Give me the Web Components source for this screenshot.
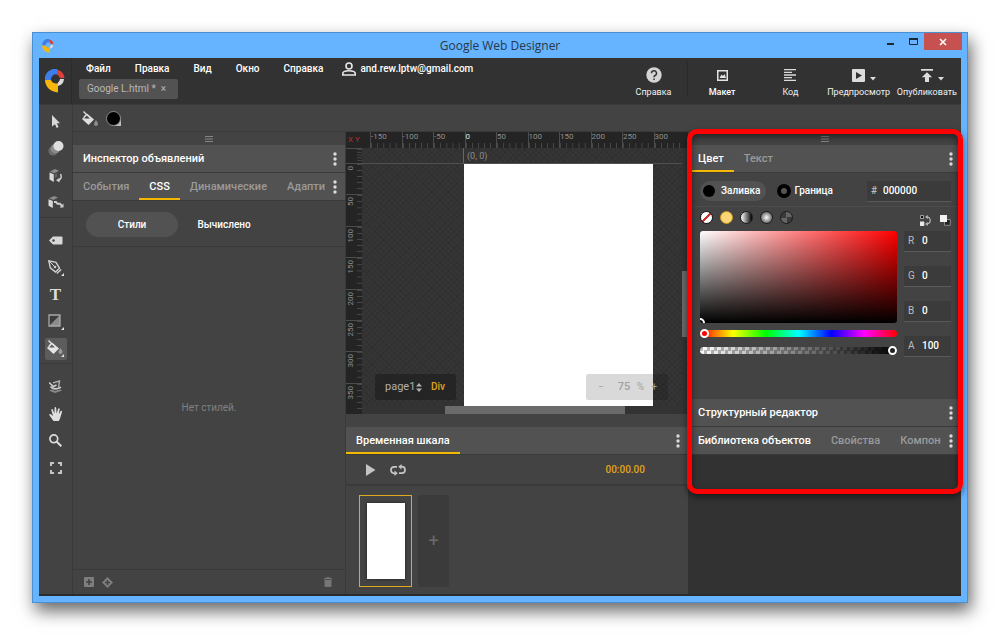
<!DOCTYPE html>
<html lang="ru">
<head>
<meta charset="utf-8">
<title>Google Web Designer</title>
<style>
  html, body { height: 100%; margin: 0; }
  body {
    box-sizing: border-box; padding: 32px; background: #fff; overflow: hidden;
    font: 11px/16px Roboto, "Noto Sans", sans-serif; color: #f0f0f0;
    --bar: #323232; --panel: #434343; --head: #525252; --line: #3a3a3a; --field: #3b3b3b;
    --muted: #9a9a9a; --accent: #f5b800;
  }
</style>
</head>
<body>
<gwd-window heading="Google Web Designer">
  <gwd-app-bar></gwd-app-bar>
  <gwd-workspace>
    <gwd-tool-rail slot="rail"></gwd-tool-rail>
    <gwd-fill-bar slot="options"></gwd-fill-bar>
    <gwd-inspector slot="left"></gwd-inspector>
    <gwd-stage slot="stage"></gwd-stage>
    <gwd-timeline slot="timeline"></gwd-timeline>
    <gwd-side slot="right"></gwd-side>
  </gwd-workspace>
</gwd-window>

<script>
const RESET = `
  *, *::before, *::after { box-sizing: border-box; }
  button, input, select { font: inherit; color: inherit; background: none; border: 0; margin: 0; padding: 0; border-radius: 0; min-width: 0; }
  button { display: inline-flex; align-items: center; justify-content: center; white-space: nowrap; }
  input, select { appearance: none; outline: 0; }
`;

function element(name, css, html, setup) {
  const template = document.createElement('template');
  template.innerHTML = `<style>${RESET}${css}</style>${html}`;
  customElements.define(name, class extends HTMLElement {
    connectedCallback() {
      if (this.shadowRoot) return;
      this.attachShadow({ mode: 'open' }).append(template.content.cloneNode(true));
      if (setup) setup(this, this.shadowRoot);
    }
  });
}

/* name: [width, height, markup] */
const ICONS = {
  logo: [20, 24, '<path d="M0 11A10 10 0 0 1 12 0V5.500A5 5 0 0 0 6 11Z" fill="#3f7de8"/><path d="M12 0.500A10 10 0 0 1 19.500 9H15A6 6 0 0 0 12 5.500Z" fill="#e04038"/><path d="M15 10H19A8 8 0 0 1 13 17V13.500A5 5 0 0 0 15 10Z" fill="#dcdcdc"/><path d="M0 11H6A5 5 0 0 0 13 14V23.500C6 23 0 18 0 11Z" fill="#f4b60f"/>'],
  min: [8, 8, '<path d="M0 5h7v2H0z" fill="#1c2833"/>'],
  max: [9, 8, '<path d="M.5.500h8v6h-8z" fill="none" stroke="#1c2833"/><path d="M0 0h9v2H0z" fill="#1c2833"/>'],
  close: [8, 8, '<path d="M1 1l6 6M7 1L1 7" stroke="#fff" stroke-width="1.600"/>'],
  user: [14, 14, '<circle cx="7" cy="4" r="3" fill="none" stroke="#e8e8e8" stroke-width="1.600"/><path d="M.8 13v-1.500C.8 9.500 4 8.800 7 8.800s6.200.7 6.200 2.700V13z" fill="none" stroke="#e8e8e8" stroke-width="1.600"/>'],
  help: [16, 16, '<circle cx="8" cy="8" r="7.700" fill="#d4d4d4"/><path d="M5.500 6.300a2.500 2.500 0 1 1 3.600 2.200C8.300 9 8 9.300 8 10.300M8 11.400v1.600" fill="none" stroke="#323232" stroke-width="1.500"/>'],
  image: [11, 11, '<path d="M.75.750h9.500v9.500H.75z" fill="none" stroke="#e4e4e4" stroke-width="1.500"/><path d="M2.500 8L4.500 4.500 6 6l1.500-2L9 8z" fill="#e4e4e4"/>'],
  lines: [12, 12, '<path d="M0 .7h12M0 3.300h8M0 6h12M0 8.700h8M0 11.300h12" stroke="#dcdcdc" stroke-width="1.300"/>'],
  preview: [13, 13, '<rect width="13" height="13" rx="1" fill="#dcdcdc"/><path d="M4 3l6 3.500L4 10z" fill="#323232"/>'],
  publish: [12, 13, '<path d="M0 0h12v1.800H0zM6 3.200l5.200 5H8V13H4V8.200H.8z" fill="#dcdcdc"/>'],
  caret: [6, 4, '<path d="M0 0h6L3 3.500z" fill="#dcdcdc"/>'],
  grip: [8, 6, '<path d="M0 .5h8M0 3h8M0 5.500h8" stroke="#858585"/>'],
  dots: [4, 14, '<circle cx="2" cy="2" r="1.700"/><circle cx="2" cy="7" r="1.700"/><circle cx="2" cy="12" r="1.700"/>'],
  arrow: [8, 13, '<path d="M0 0l8 8.200H4.800L6.600 12l-1.900.9L3 9.200 0 11.500z" fill="#d8d8d8"/>'],
  motion: [16, 15, '<circle cx="5" cy="10" r="4.600" fill="#6c6c6c"/><circle cx="7.500" cy="7.600" r="4.800" fill="#8c8c8c"/><circle cx="10.500" cy="5" r="5" fill="#dedede"/>'],
  rotate3d: [14, 14, '<path d="M1 2.500L6 0l4 1.800-4.500 2.500z" fill="#8a8a8a"/><path d="M.5 3.500l4.300 1.700V13L.5 10.500z" fill="#d8d8d8"/><path d="M6 5.300l2-1v3.500L6 9z" fill="#666"/><path d="M11.500 5c1.600 2.800.6 5.200-2 6.500" fill="none" stroke="#cfcfcf" stroke-width="1.500"/><path d="M10.500 8.800v4.700L7 11.200z" fill="#cfcfcf"/>'],
  move3d: [16, 13, '<path d="M1 2.200L6 0l4 1.600-4.500 2.300z" fill="#8a8a8a"/><path d="M.5 3.200l4.300 1.700V12L.5 9.800z" fill="#d8d8d8"/><path d="M6 6h2l1.500 1.800h2.500l2 2" fill="none" stroke="#cfcfcf" stroke-width="1.900"/><path d="M15.500 7.500v4h-4z" fill="#cfcfcf"/>'],
  tag: [14, 9, '<path d="M4 .5h8.500a1 1 0 0 1 1 1v6a1 1 0 0 1-1 1H4l-4-4z" fill="#d8d8d8"/><circle cx="4.500" cy="4.500" r="1.200" fill="#434343"/>'],
  pen: [16, 16, '<path d="M.8.8l1.500 7 5.200 4.200 4-3.800L8 2.300z" fill="none" stroke="#cfcfcf" stroke-width="1.400"/><path d="M.8.8l5.500 5.500" stroke="#cfcfcf"/><circle cx="7" cy="7" r="1.300" fill="#cfcfcf"/><path d="M8.800 13.500l4.300-4" stroke="#cfcfcf" stroke-width="1.500"/><path d="M16 13v3h-3z" fill="#e4e4e4"/>'],
  shape: [17, 16, '<path d="M2 1h11v11H2z" fill="#3b3b3b"/><path d="M13 1v11H2z" fill="#8c8c8c"/><path d="M2 1h11v11H2z" fill="none" stroke="#a8a8a8" stroke-width="1.300"/><path d="M17 13v3h-3z" fill="#e4e4e4"/>'],
  bucket: [16, 15, '<path d="M5 2.500l7 6L6.500 14 0 8z" fill="#dedede"/><path d="M1.500.5l6 6M5.200 3.200L2 6" stroke="#dedede" stroke-width="1.400"/><path d="M4.800 4.500L8 7.500H2z" fill="#434343"/><path d="M14 9c1.500 2.200 2 3 2 4a2 2 0 0 1-4 0c0-1 .7-2 2-4z" fill="#8c8c8c"/>'],
  bucketTool: [17, 17, '<path d="M5 2.500l7 6L6.500 14 0 8z" fill="#e6e6e6"/><path d="M1.500.5l6 6M5.200 3.200L2 6" stroke="#e6e6e6" stroke-width="1.400"/><path d="M4.800 4.500L8 7.500H2z" fill="#5c5c5c"/><path d="M13.500 8c1.500 2.200 2 3 2 4a2 2 0 0 1-4 0c0-1 .7-2 2-4z" fill="#9a9a9a"/><path d="M17 14v3h-3z" fill="#e4e4e4"/>'],
  rotate: [13, 13, '<path d="M4 2.800L10.500 1 9.500 7.500" fill="none" stroke="#b0b0b0" stroke-width="1.400"/><path d="M0 2.500l4.500 4 3-1.500M1.500 6.500c2 2.800 6 3 10.500.8" fill="none" stroke="#cfcfcf" stroke-width="1.600"/><path d="M0 10.500l6 2.500 7-2.500-2-1-5 1.500-3-1.500z" fill="#8c8c8c"/>'],
  hand: [14, 14, '<path d="M4.500 14C3 12 1.500 9.800.3 8c-.5-.9.7-1.500 1.500-.8L4 9 2.300 3c-.2-1 1.200-1.400 1.500-.4L5.400 6.600 5.600 1c0-1.200 1.500-1.200 1.600 0l.4 5.400L9.200 1.700c.4-1 1.700-.6 1.500.5L9.800 7.200l1.800-3c.6-.9 1.800-.2 1.400.8L11 11.500c-.4 1.300-.8 2-1.300 2.500z" fill="#e0e0e0"/>'],
  zoom: [13, 13, '<circle cx="4.800" cy="4.800" r="3.900" fill="none" stroke="#dcdcdc" stroke-width="1.700"/><path d="M7.800 7.800l4.500 4.500" stroke="#dcdcdc" stroke-width="2"/>'],
  fit: [12, 12, '<path d="M1 4V1h3M8 1h3v3M11 8v3H8M4 11H1V8" fill="none" stroke="#c4c4c4" stroke-width="2"/>'],
  add: [10, 10, '<rect width="10" height="10" rx="1" fill="#7e7e7e"/><path d="M5 2v6M2 5h6" stroke="#434343" stroke-width="1.600"/>'],
  keyframe: [11, 11, '<path d="M5.500 0L11 5.500 5.500 11 0 5.500z" fill="#7e7e7e"/><path d="M5.500 3v5M3 5.500h5" stroke="#434343" stroke-width="1.400"/>'],
  trash: [8, 10, '<path d="M0 1h2.500L3 0h2l.5 1H8v1.200H0zM.5 3h7v6a1 1 0 0 1-1 1h-5a1 1 0 0 1-1-1z" fill="#767676"/>'],
  play: [10, 12, '<path d="M0 0l9.500 6L0 12z" fill="#c4c4c4"/>'],
  loop: [16, 12, '<path d="M5.500 9.300H4.200a3.200 3.200 0 0 1 0-6.400H7M10.500 2.700h1.300a3.200 3.200 0 0 1 0 6.400H9" fill="none" stroke="#c4c4c4" stroke-width="1.700"/><path d="M11.500 0v5.400L8.200 2.700zM4.500 6.600V12l3.300-2.700z" fill="#c4c4c4"/>'],
  updown: [6, 9, '<path d="M3 0l3 3.500H0zM3 9L0 5.500h6z" fill="#b0b0b0"/>'],
  swap: [11, 11, '<path d="M.5.500h3v3h-3z" fill="#111" stroke="#bbb" stroke-width=".8"/><path d="M0 6.500h4.300V11H0z" fill="#e8e8e8"/><path d="M7 2c4 0 4.500 6.500 0 7" fill="none" stroke="#b8b8b8" stroke-width="1.200"/><path d="M7.800 0v4L5 2zM7.800 7v4L5 9z" fill="#b8b8b8"/>'],
  reset: [11, 11, '<path d="M4.500 4.500h5.800v5.800H4.500z" fill="#222" stroke="#8a8a8a"/><path d="M0 0h7v7H0z" fill="#f4f4f4"/>']
};

class GwdIcon extends HTMLElement {
  connectedCallback() {
    if (this.shadowRoot) return;
    const [w, h, art] = ICONS[this.getAttribute('name')];
    const width = this.getAttribute('width') || w;
    this.attachShadow({ mode: 'open' }).innerHTML =
      `<style>:host{display:inline-flex;flex:none}svg{display:block;fill:#dadada}</style>
       <svg width="${width}" height="${Math.round(h * width / w)}" viewBox="0 0 ${w} ${h}" aria-hidden="true">${art}</svg>`;
  }
}
customElements.define('gwd-icon', GwdIcon);

element('gwd-window', `
  :host { display: flex; flex-direction: column; height: 100%; background: #66b3ff; border: 1px solid #4a8fd0;
    box-sizing: border-box; box-shadow: 3px 8px 16px rgba(0,0,0,.6); }
  header { display: grid; grid-template-columns: 1fr auto 1fr; align-items: center; height: 25px; flex: none; }
  header gwd-icon[name=logo] { margin-left: 9px; }
  h1 { margin: 0; font: 12px/16px "Open Sans", "Noto Sans", sans-serif; color: #26384a; }
  nav { display: flex; justify-content: flex-end; align-self: start; padding-right: 5px; }
  nav button { width: 22px; height: 17px; }
  nav .close { width: 38px; background: #c75050; }
  main { flex: 1; min-height: 0; margin: 0 6px 6px; display: flex; flex-direction: column; background: var(--panel); border-bottom: 2px solid #2b2b2b; }
`, `
  <header><gwd-icon name="logo" width="12"></gwd-icon><h1></h1>
    <nav><button aria-label="Свернуть"><gwd-icon name="min"></gwd-icon></button><button aria-label="Развернуть"><gwd-icon name="max"></gwd-icon></button><button class="close" aria-label="Закрыть"><gwd-icon name="close"></gwd-icon></button></nav>
  </header>
  <main><slot></slot></main>
`, (host, root) => { root.querySelector('h1').textContent = host.getAttribute('heading'); });

element('gwd-action', `
  :host { display: block; flex: 1 1 0; min-width: 0; }
  button { display: flex; flex-direction: column; width: 100%; justify-content: flex-start; padding-top: 8px; font-size: 9px; line-height: 16px; }
  .icon { display: flex; align-items: center; justify-content: center; gap: 5px; height: 18px; flex: none; }
  .icon gwd-icon[name=caret] { align-self: flex-end; margin-bottom: 3px; }
  :host([menu]) .icon { padding-left: 11px; }
  :host([current]) button { font-weight: 500; color: #fff; }
`, `<button><span class="icon"></span><slot></slot></button>`, (host, root) => {
  root.querySelector('.icon').innerHTML = `<gwd-icon name="${host.getAttribute('icon')}"></gwd-icon>` +
    (host.hasAttribute('menu') ? '<gwd-icon name="caret"></gwd-icon>' : '');
});

element('gwd-app-bar', `
  :host { display: flex; flex: none; height: 47px; background: var(--bar); border-bottom: 1px solid #393939; box-sizing: border-box; font-size: 10px; }
  .logo { width: 33px; display: grid; place-items: center; flex: none; border-right: 1px solid #2c2c2c; }
  .left { flex: 1; min-width: 0; padding-left: 7px; }
  .menu { display: flex; align-items: center; gap: 24px; height: 21px; padding-left: 7px; font-weight: 500; color: #fff; }
  .menu button { height: 20px; }
  .account { gap: 4px; margin-left: -5px; }
  .file { display: inline-flex; align-items: center; gap: 5px; height: 20px; padding: 0 12px 0 8px; background: var(--head); border-radius: 2px; color: #b8b8b8; }
  .help, .modes { display: flex; flex: none; }
  .help { width: 69px; background: linear-gradient(#292929, #292929) 100% 4px / 1px 35px no-repeat; }
  .modes { width: 273px; }
`, `
  <div class="logo"><gwd-icon name="logo"></gwd-icon></div>
  <div class="left">
    <nav class="menu"><button>Файл</button><button>Правка</button><button>Вид</button><button>Окно</button><button>Справка</button>
      <button class="account"><gwd-icon name="user"></gwd-icon>and.rew.lptw@gmail.com</button></nav>
    <div class="file"><span>Google L.html *</span><button aria-label="Закрыть файл">×</button></div>
  </div>
  <div class="help"><gwd-action icon="help">Справка</gwd-action></div>
  <div class="modes"><gwd-action icon="image" current>Макет</gwd-action><gwd-action icon="lines">Код</gwd-action><gwd-action icon="preview" menu>Предпросмотр</gwd-action><gwd-action icon="publish" menu>Опубликовать</gwd-action></div>
`);

element('gwd-workspace', `
  :host { flex: 1; min-height: 0; display: grid; grid-template-columns: 34px 273px minmax(0, 1fr) 273px;
    grid-template-rows: 27px minmax(0, 282fr) minmax(0, 180fr);
    grid-template-areas: "rail options options options" "rail left stage right" "rail left timeline right"; }
  slot { display: grid; min-height: 0; min-width: 0; }
  slot[name=rail] { grid-area: rail; } slot[name=options] { grid-area: options; } slot[name=left] { grid-area: left; }
  slot[name=stage] { grid-area: stage; } slot[name=timeline] { grid-area: timeline; } slot[name=right] { grid-area: right; }
`, ['rail', 'options', 'left', 'stage', 'timeline', 'right'].map(s => `<slot name="${s}"></slot>`).join(''));

element('gwd-tool-rail', `
  :host { display: block; border-right: 1px solid var(--line); padding-top: 3px; box-sizing: border-box; }
  .group { display: grid; grid-auto-rows: 27px; justify-items: center; align-items: center; }
  .group + .group { border-top: 1px solid var(--line); margin-top: 1px; padding-top: 9px; }
  button { width: 22px; height: 22px; border-radius: 2px; }
  button[aria-pressed=true] { background: #5c5c5c; }
  .text { font: bold 17px/20px "Liberation Serif", serif; color: #dcdcdc; }
`, [[['arrow', 'Выделение'], ['motion', 'Движение'], ['rotate3d', 'Поворот'], ['move3d', 'Перемещение']],
    [['tag', 'Тег'], ['pen', 'Перо'], ['T', 'Текст'], ['shape', 'Фигура'], ['bucketTool', 'Заливка']],
    [['rotate', 'Вращение сцены'], ['hand', 'Рука'], ['zoom', 'Масштаб'], ['fit', 'По размеру']]]
  .map(g => `<div class="group">${g.map(([i, label]) => i === 'T'
    ? `<button class="text" aria-label="${label}">T</button>`
    : `<button aria-label="${label}" aria-pressed="${i === 'bucketTool'}"><gwd-icon name="${i}"></gwd-icon></button>`).join('')}</div>`).join(''));

element('gwd-fill-bar', `
  :host { display: flex; align-items: center; gap: 7px; padding-left: 9px; border-bottom: 1px solid var(--line); box-sizing: border-box; }
  .chip { width: 16px; height: 16px; background: linear-gradient(135deg, transparent 70%, #bdbdbd 70%); }
  .chip::before { content: ""; width: 15px; height: 15px; border-radius: 50%; background: #000; border: 1px solid #8d8d8d; }
`, `<gwd-icon name="bucket"></gwd-icon><button class="chip" aria-label="Цвет заливки"></button>`);

element('gwd-grip', `
  :host { display: flex; align-items: center; justify-content: center; height: 13px; flex: none; }
`, `<gwd-icon name="grip"></gwd-icon>`);

/* Tabs are slotted buttons, so their owner's reset has to be overruled here. */
element('gwd-tabs', `
  :host { display: flex; flex: none; height: 28px; background: var(--head); border-bottom: 1px solid var(--line); box-sizing: border-box; }
  .list { display: flex; flex: 1; min-width: 0; overflow: hidden; }
  ::slotted(button) { flex: none; padding: 2px 10px 0 !important; border-bottom: 2px solid transparent !important;
    font-weight: 500 !important; color: var(--muted) !important; }
  ::slotted(button.on) { color: #fff !important; }
  ::slotted(button.line) { border-bottom-color: var(--accent) !important; }
  .more { width: 20px; flex: none; }
`, `<div class="list"><slot></slot></div><button class="more" aria-label="Меню панели"><gwd-icon name="dots"></gwd-icon></button>`);

element('gwd-inspector', `
  :host { display: flex; flex-direction: column; border-right: 1px solid var(--line); box-sizing: border-box; min-width: 0; }
  .modes { display: flex; align-items: center; height: 46px; padding: 2px 0 0 13px; border-bottom: 1px solid var(--line); font-size: 10px; font-weight: 500; color: #fff; flex: none; }
  .modes button { width: 92px; height: 25px; border-radius: 13px; }
  .modes .on { background: var(--head); }
  .empty { flex: 1; display: grid; place-items: center; color: #808080; margin: 0; font-size: 10px; }
  footer { display: flex; align-items: center; gap: 8px; height: 25px; flex: none; padding: 0 13px 0 11px; border-top: 1px solid var(--line); }
  footer .del { margin-left: auto; }
`, `
  <gwd-grip></gwd-grip>
  <gwd-tabs><button class="on">Инспектор объявлений</button></gwd-tabs>
  <gwd-tabs><button>События</button><button class="on line">CSS</button><button>Динамические</button><button>Адаптивный</button></gwd-tabs>
  <div class="modes"><button class="on">Стили</button><button>Вычислено</button></div>
  <p class="empty">Нет стилей.</p>
  <footer><button aria-label="Добавить"><gwd-icon name="add"></gwd-icon></button><button aria-label="Ключевой кадр"><gwd-icon name="keyframe"></gwd-icon></button><button class="del" aria-label="Удалить"><gwd-icon name="trash"></gwd-icon></button></footer>
`);

element('gwd-stage', `
  :host { display: grid; grid-template-columns: 16px minmax(0, 1fr) 6px; grid-template-rows: 16px minmax(0, 1fr) 8px; background: #242424; min-width: 0; overflow: hidden; }
  .xy { display: flex; align-items: center; justify-content: center; font-size: 8px; line-height: 8px; color: #b03030; }
  .rx, .ry { display: grid; font-size: 8px; line-height: 8px; color: #8f8f8f; overflow: hidden; }
  .rx { grid-column: 2 / 4; grid-template-columns: 8px repeat(10, 1fr); padding-right: 3px; }
  .rx span { border-left: 1px solid #4c4c4c; padding: 1px 0 0; background: linear-gradient(90deg, #474747 1px, transparent 1px) 0 100% / 20% 5px repeat-x; }
  .rx span:nth-child(5) { color: #e0e0e0; }
  .ry { grid-row: 2 / 4; grid-template-rows: 15px repeat(8, 1fr); }
  .ry span { border-top: 1px solid #4c4c4c; background: linear-gradient(#474747 1px, transparent 1px) 100% 0 / 5px 20% repeat-y; }
  .ry b { font-weight: 400; writing-mode: vertical-rl; transform: rotate(180deg); margin: 2px 0 0 1px; display: block; width: 8px; text-align: right; }
  .view { position: relative; display: grid; grid-template-columns: 102px 189px 1fr; grid-template-rows: 16px minmax(0, 1fr);
    background: repeating-linear-gradient(45deg, rgba(0,0,0,.08) 0 1px, transparent 1px 4px), repeating-linear-gradient(-45deg, rgba(0,0,0,.08) 0 1px, transparent 1px 4px), #353535; }
  .view::before { content: ""; position: absolute; left: 0; right: 0; top: 15px; height: 1px; background: #505050; }
  .origin { grid-column: 2 / 4; padding-left: 3px; border-left: 1px solid #666; margin-left: -1px; font-size: 9px; line-height: 16px; color: #8f8f8f; }
  .page { grid-row: 2; grid-column: 2; background: #fff; }
  .crumb, .scale { position: absolute; bottom: 6px; height: 26px; display: flex; align-items: center; border-radius: 2px; }
  .crumb { left: 13px; padding: 0 11px 0 10px; background: rgba(34,34,34,.8); color: #b0b0b0; font-size: 10px; }
  .crumb label { display: flex; align-items: center; gap: 2px; }
  .crumb select { width: 29px; font-size: 11px; }
  .crumb button { margin-left: 9px; color: #e0a51a; font-weight: 500; }
  .scale { right: 14px; width: 82px; padding: 0 11px 0 12px; background: rgba(0,0,0,.15); color: #a2a2a2; justify-content: space-between; font-size: 10px; }
  .scale label { display: flex; gap: 3px; padding-left: 7px; }
  .scale input { width: 16px; font-size: 11px; font-weight: 500; }
  .vs { grid-column: 3; grid-row: 2 / 4; background: #333; display: flex; flex-direction: column; }
  .vs::before { content: ""; flex: 123; } .vs i { flex: 66; background: #6a6a6a; } .vs::after { content: ""; flex: 77; }
  .hs { grid-column: 2; grid-row: 3; background: #333; display: flex; }
  .hs::before { content: ""; flex: 83; } .hs i { flex: 179; background: #6a6a6a; } .hs::after { content: ""; flex: 57; }
`, `
  <div class="xy">X Y</div>
  <div class="rx"><i></i>${[-150, -100, -50, 0, 50, 100, 150, 200, 250, 300].map(n => `<span>${n}</span>`).join('')}</div>
  <div class="ry"><span></span>${[0, 50, 100, 150, 200, 250, 300, 350].map(n => `<span><b>${n}</b></span>`).join('')}</div>
  <div class="view"><div class="origin">(0, 0)</div><div class="page"></div>
    <div class="crumb"><label><select aria-label="Страница"><option>page1</option></select><gwd-icon name="updown"></gwd-icon></label><button>Div</button></div>
    <div class="scale"><button aria-label="Уменьшить">−</button><label><input value="75" aria-label="Масштаб">%</label><button aria-label="Увеличить">+</button></div>
  </div>
  <div class="vs"><i></i></div><div class="hs"><i></i></div>
`);

element('gwd-timeline', `
  :host { display: flex; flex-direction: column; padding-top: 13px; box-sizing: border-box; min-width: 0; }
  .controls { display: flex; align-items: center; gap: 14px; height: 31px; flex: none; padding: 0 43px 0 20px; border-bottom: 2px solid var(--line); }
  time { margin-left: auto; color: #e0a51a; font-size: 10px; font-weight: 500; }
  .frames { flex: 1; display: flex; gap: 6px; padding: 9px 13px 7px; min-height: 0; }
  .frames button { height: 100%; }
  .frames .frame { width: 53px; padding: 8px 7px; box-shadow: inset 0 0 0 1px #e0a81e; }
  .frame span { width: 38px; height: 100%; background: #fff; box-shadow: 0 0 3px #222; }
  .new { width: 31px; background: var(--field); border-radius: 2px; color: #6c6c6c; font-size: 18px; }
`, `
  <gwd-tabs><button class="on line">Временная шкала</button></gwd-tabs>
  <div class="controls"><button aria-label="Воспроизвести"><gwd-icon name="play"></gwd-icon></button><button aria-label="Повтор"><gwd-icon name="loop"></gwd-icon></button><time>00:00.00</time></div>
  <div class="frames"><button class="frame" aria-label="Кадр 1"><span></span></button><button class="new" aria-label="Новый кадр">+</button></div>
`);

element('gwd-field', `
  :host { display: block; min-width: 0; font-size: 10px; }
  label { display: flex; align-items: center; height: 21px; padding-left: 4px; background: var(--field); border-bottom: 1px solid #5a5a5a; color: #bdbdbd; }
  span { width: 14px; flex: none; }
  :host([wide]) span { width: 12px; }
  input { width: 100%; font-weight: 500; color: #fff; }
`, `<label><span></span><input></label>`, (host, root) => {
  root.querySelector('span').textContent = host.getAttribute('label');
  root.querySelector('input').value = host.getAttribute('value');
});

element('gwd-color-picker', `
  :host { display: block; }
  .target { display: flex; align-items: center; height: 34px; padding: 3px 10px 0 12px; border-bottom: 1px solid #4c4c4c; font-size: 10px; font-weight: 500; color: #fff; }
  .target button { height: 20px; gap: 6px; padding: 0 5px 0 3px; border-radius: 10px; }
  .target .on { background: var(--head); margin-right: 8px; }
  .target button::before { content: ""; width: 12px; height: 12px; border-radius: 50%; background: #000; }
  .target .ring { gap: 4px; }
  .target .ring::before { width: 14px; height: 14px; background: #555; border: 4px solid #000; }
  .target gwd-field { width: 84px; margin-left: auto; }
  .picker { display: grid; grid-template-columns: minmax(0, 1fr) 47px; gap: 0 7px; padding: 0 10px 42px 12px; }
  .kinds, .extra { display: flex; align-items: center; height: 24px; }
  .kinds { gap: 7px; padding-bottom: 4px; }
  .kinds button { width: 13px; height: 13px; border-radius: 50%; border: 1px solid #1c1c1c; }
  .kinds .none { background: linear-gradient(135deg, #fff 44%, #d03030 44% 56%, #fff 56%); }
  .kinds .solid { background: #fbd677; border-color: #c8971e; }
  .linear { background: linear-gradient(90deg, #fff, #000); }
  .radial { background: radial-gradient(#fff, #333); }
  .bitmap { background: conic-gradient(#666 25%, #3a3a3a 0 50%, #666 0 75%, #3a3a3a 0); }
  .extra { justify-content: flex-end; gap: 9px; padding-top: 3px; }
  .area { height: 92px; border-radius: 3px; overflow: hidden; position: relative; background: linear-gradient(transparent, #000), linear-gradient(90deg, #fff, #f00); }
  .area::after { content: ""; position: absolute; left: -5px; bottom: -5px; width: 10px; height: 10px; border: 2px solid #fff; border-radius: 50%; }
  .sliders { display: flex; flex-direction: column; gap: 7px; padding-top: 5px; }
  input[type=range] { width: 100%; height: 10px; display: block; }
  input[type=range]::-webkit-slider-runnable-track { height: 7px; border-radius: 4px; background: var(--track); }
  input[type=range]::-webkit-slider-thumb { appearance: none; width: 9px; height: 9px; margin-top: -1px; border: 2px solid #fff; border-radius: 50%; background: var(--thumb); }
  .hue { --thumb: #f00; --track: linear-gradient(90deg, red, yellow, lime, cyan, blue, magenta, red); }
  .alpha { --thumb: #222; --track: linear-gradient(90deg, transparent, #000), repeating-conic-gradient(#fff 0 25%, #bbb 0 50%) 0 0 / 7px 7px; }
  .channels { display: grid; align-content: start; row-gap: 14px; }
`, `
  <div class="target"><button class="on">Заливка</button><button class="ring">Граница</button><gwd-field wide label="#" value="000000"></gwd-field></div>
  <div class="picker">
    <div class="kinds"><button class="none" aria-label="Нет"></button><button class="solid" aria-label="Сплошной"></button><button class="linear" aria-label="Линейный"></button><button class="radial" aria-label="Радиальный"></button><button class="bitmap" aria-label="Изображение"></button></div>
    <div class="extra"><button aria-label="Поменять"><gwd-icon name="swap"></gwd-icon></button><button aria-label="Сбросить"><gwd-icon name="reset"></gwd-icon></button></div>
    <div><div class="area"></div>
      <div class="sliders"><input class="hue" type="range" max="360" value="0" aria-label="Оттенок"><input class="alpha" type="range" max="100" value="100" aria-label="Непрозрачность"></div></div>
    <div class="channels"><gwd-field label="R" value="0"></gwd-field><gwd-field label="G" value="0"></gwd-field><gwd-field label="B" value="0"></gwd-field><gwd-field label="A" value="100"></gwd-field></div>
  </div>
`);

element('gwd-side', `
  :host { display: flex; flex-direction: column; position: relative; background: var(--panel); min-width: 0; }
  .library { flex: 1; background: var(--bar); }
  .highlight { position: absolute; inset: -3px -2px 100px -1px; border: 5px solid #f00; border-radius: 10px; pointer-events: none;
    box-shadow: 0 3px 6px rgba(0,0,0,.5), inset 0 3px 6px rgba(0,0,0,.5); }
`, `
  <gwd-grip></gwd-grip>
  <gwd-tabs><button class="on line">Цвет</button><button>Текст</button></gwd-tabs>
  <gwd-color-picker></gwd-color-picker>
  <gwd-tabs><button class="on">Структурный редактор</button></gwd-tabs>
  <gwd-tabs><button class="on">Библиотека объектов</button><button>Свойства</button><button>Компоненты</button></gwd-tabs>
  <div class="library"></div>
  <div class="highlight"></div>
`);
</script>
</body>
</html>
